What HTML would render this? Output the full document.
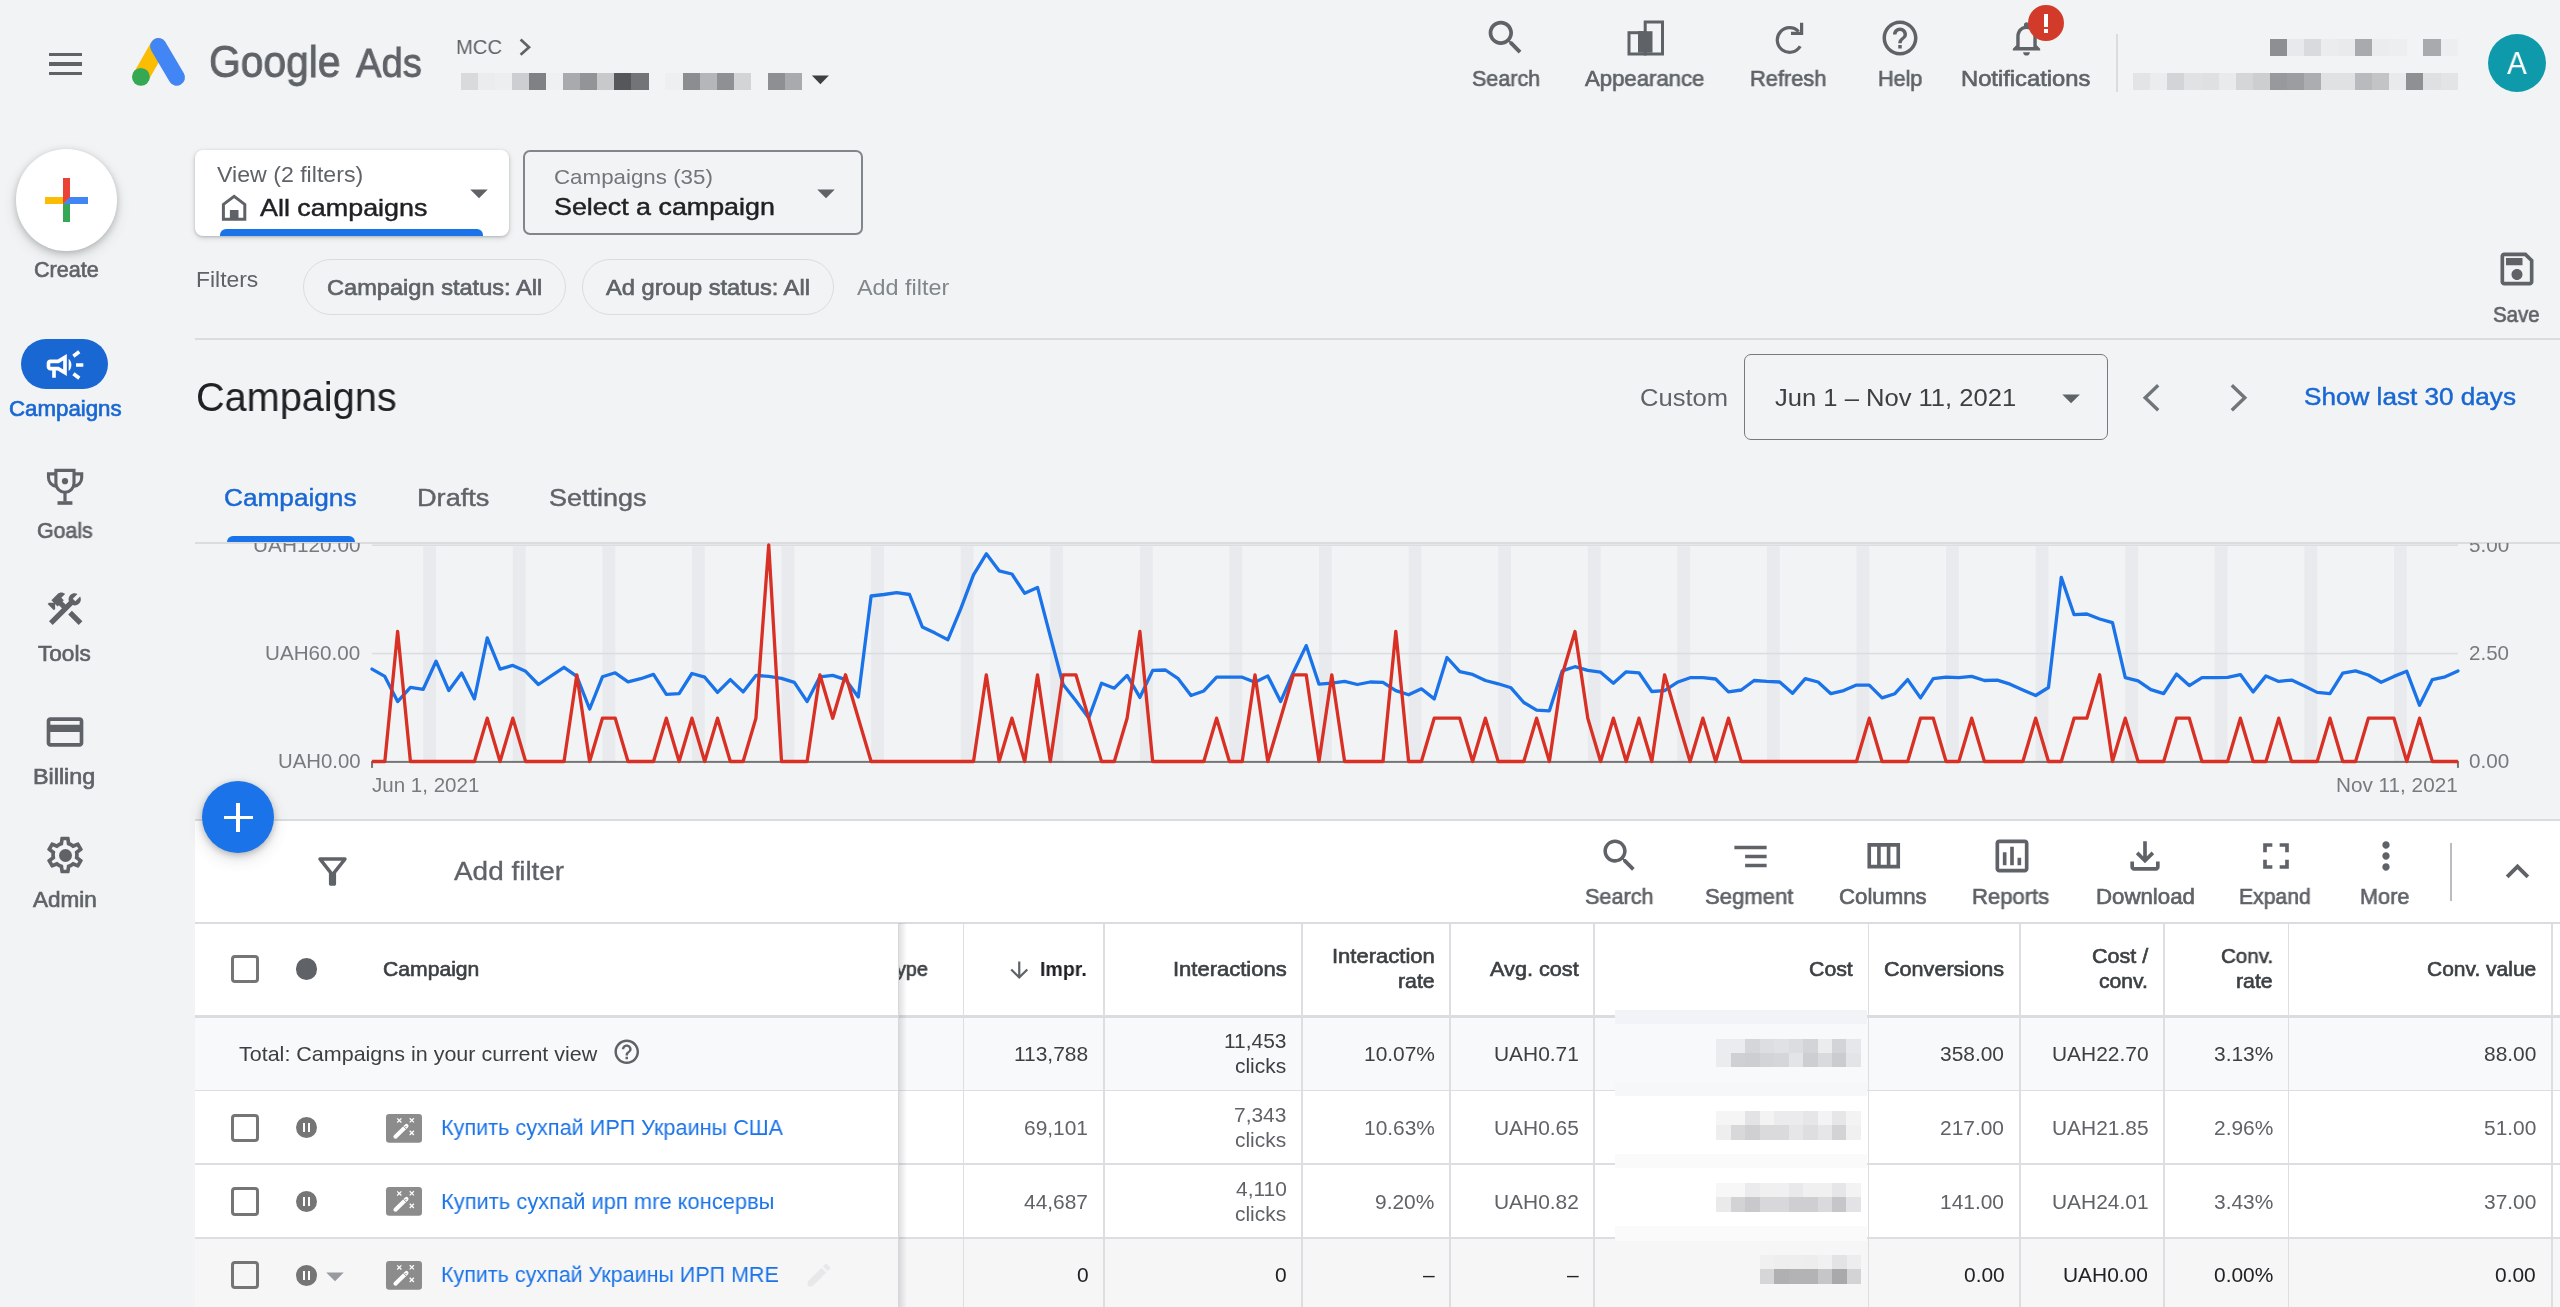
<!DOCTYPE html>
<html lang="en"><head><meta charset="utf-8"><title>Campaigns - Google Ads</title>
<style>
html,body{margin:0;padding:0}
body{width:2560px;height:1307px;overflow:hidden;background:#f1f3f4;position:relative;
 font-family:"Liberation Sans",sans-serif;}
.t{position:absolute;white-space:nowrap;display:block;will-change:transform}
.i{position:absolute;display:block;overflow:visible}
.b{position:absolute;display:block}
</style></head>
<body>
<!-- header -->
<div class="b" style="left:48.5px;top:52.5px;width:33.0px;height:3.5px;background:#5f6368;"></div>
<div class="b" style="left:48.5px;top:62.0px;width:33.0px;height:3.5px;background:#5f6368;"></div>
<div class="b" style="left:48.5px;top:71.5px;width:33.0px;height:3.5px;background:#5f6368;"></div>
<svg class="i" style="left:128px;top:34px" width="62" height="56" viewBox="0 0 62 56"><line x1="30.3" y1="12.4" x2="12.9" y2="42.9" stroke="#fbbc04" stroke-width="16.5" stroke-linecap="round"/><line x1="30.3" y1="12.25" x2="48.75" y2="43.45" stroke="#4285f4" stroke-width="16.5" stroke-linecap="round"/><circle cx="12.9" cy="42.9" r="8.9" fill="#34a853"/></svg>
<span class="t" style="left:209.4px;top:40.0px;font-size:44.04px;line-height:44.04px;color:#5f6368;transform:scaleX(0.9260);transform-origin:0 0;-webkit-text-stroke:0.9px #5f6368;">Google</span>
<span class="t" style="left:356.3px;top:43.0px;font-size:41.13px;line-height:41.13px;color:#5f6368;transform:scaleX(0.9297);transform-origin:0 0;-webkit-text-stroke:0.9px #5f6368;">Ads</span>
<span class="t" style="left:455.5px;top:36.0px;font-size:21.08px;line-height:21.08px;color:#5f6368;transform:scaleX(0.9605);transform-origin:0 0;">MCC</span>
<svg class="i" style="left:515px;top:35px" width="20" height="24" viewBox="515 35 20 24" fill="none" stroke="#5f6368" stroke-width="2.7"><path d="M520.6 39.6L529 47.2L520.6 54.8"/></svg>
<div class="b" style="left:460.7px;top:73.0px;width:17.4px;height:16.9px;background:#d9dadc;"></div>
<div class="b" style="left:477.8px;top:73.0px;width:17.4px;height:16.9px;background:#ebecee;"></div>
<div class="b" style="left:494.8px;top:73.0px;width:17.4px;height:16.9px;background:#edeef0;"></div>
<div class="b" style="left:511.9px;top:73.0px;width:17.4px;height:16.9px;background:#cdced1;"></div>
<div class="b" style="left:528.9px;top:73.0px;width:17.4px;height:16.9px;background:#808185;"></div>
<div class="b" style="left:546.0px;top:73.0px;width:17.4px;height:16.9px;background:#eff0f2;"></div>
<div class="b" style="left:563.1px;top:73.0px;width:17.4px;height:16.9px;background:#a9aaad;"></div>
<div class="b" style="left:580.1px;top:73.0px;width:17.4px;height:16.9px;background:#939497;"></div>
<div class="b" style="left:597.2px;top:73.0px;width:17.4px;height:16.9px;background:#c8c9cb;"></div>
<div class="b" style="left:614.2px;top:73.0px;width:17.4px;height:16.9px;background:#56575a;"></div>
<div class="b" style="left:631.3px;top:73.0px;width:17.4px;height:16.9px;background:#737477;"></div>
<div class="b" style="left:665.4px;top:73.0px;width:17.4px;height:16.9px;background:#eeeff1;"></div>
<div class="b" style="left:682.5px;top:73.0px;width:17.4px;height:16.9px;background:#8c8d90;"></div>
<div class="b" style="left:699.5px;top:73.0px;width:17.4px;height:16.9px;background:#b5b6b9;"></div>
<div class="b" style="left:716.6px;top:73.0px;width:17.4px;height:16.9px;background:#8f9093;"></div>
<div class="b" style="left:733.7px;top:73.0px;width:17.4px;height:16.9px;background:#d3d4d6;"></div>
<div class="b" style="left:767.8px;top:73.0px;width:17.4px;height:16.9px;background:#8e8f92;"></div>
<div class="b" style="left:784.8px;top:73.0px;width:17.4px;height:16.9px;background:#a9aaad;"></div>
<svg class="i" style="left:800.4px;top:58.4px;" width="40.8" height="42.0" viewBox="0 0 24 24" fill="#3c4043" preserveAspectRatio="none"><path d="M7 10l5 5 5-5z"/></svg>
<svg class="i" style="left:1483.0px;top:15.0px;" width="45.0" height="45.0" viewBox="0 0 24 24" fill="#5f6368" preserveAspectRatio="none"><path d="M15.5 14h-.79l-.28-.27C15.41 12.59 16 11.11 16 9.5 16 5.91 13.09 3 9.5 3S3 5.91 3 9.5 5.91 16 9.5 16c1.61 0 3.09-.59 4.23-1.57l.27.28v.79l5 4.99L20.49 19l-4.99-5zm-6 0C7.01 14 5 11.99 5 9.5S7.01 5 9.5 5 14 7.01 14 9.5 11.99 14 9.5 14z"/></svg>
<span class="t" style="left:1472.0px;top:68.0px;font-size:22.24px;line-height:22.24px;color:#5f6368;transform:scaleX(0.9679);transform-origin:0 0;-webkit-text-stroke:0.67px #5f6368;">Search</span>
<svg class="i" style="left:1627px;top:19.5px" width="38" height="36" viewBox="0 0 38 36"><rect x="18.2" y="2" width="17.3" height="32" fill="none" stroke="#5f6368" stroke-width="3"/><rect x="2" y="12.7" width="16.2" height="21.3" fill="none" stroke="#5f6368" stroke-width="3"/><rect x="11" y="11.2" width="14.5" height="21.5" fill="#5f6368"/></svg>
<span class="t" style="left:1585.4px;top:68.0px;font-size:22.24px;line-height:22.24px;color:#5f6368;transform:scaleX(0.9955);transform-origin:0 0;-webkit-text-stroke:0.67px #5f6368;">Appearance</span>
<svg class="i" style="left:1768px;top:18px" width="40" height="40" viewBox="1768 18 40 40" fill="none" stroke="#5f6368" stroke-width="3.2"><path d="M1800.2 46.2A12.3 12.3 0 1 1 1798.6 31.6"/><path d="M1801.6 22.8V33.4H1791" stroke-linejoin="miter"/></svg>
<span class="t" style="left:1750.3px;top:68.0px;font-size:22.24px;line-height:22.24px;color:#5f6368;transform:scaleX(0.9812);transform-origin:0 0;-webkit-text-stroke:0.67px #5f6368;">Refresh</span>
<svg class="i" style="left:1879.0px;top:16.5px;" width="42.0" height="42.0" viewBox="0 0 24 24" fill="#5f6368" preserveAspectRatio="none"><path d="M11 18h2v-2h-2v2zm1-16C6.48 2 2 6.48 2 12s4.48 10 10 10 10-4.48 10-10S17.52 2 12 2zm0 18c-4.41 0-8-3.59-8-8s3.59-8 8-8 8 3.59 8 8-3.59 8-8 8zm0-14c-2.21 0-4 1.79-4 4h2c0-1.1.9-2 2-2s2 .9 2 2c0 2-3 1.75-3 5h2c0-2.25 3-2.5 3-5 0-2.21-1.79-4-4-4z"/></svg>
<span class="t" style="left:1877.8px;top:68.0px;font-size:22.24px;line-height:22.24px;color:#5f6368;transform:scaleX(0.9708);transform-origin:0 0;-webkit-text-stroke:0.67px #5f6368;">Help</span>
<svg class="i" style="left:2005.5px;top:17.5px;" width="41.0" height="41.0" viewBox="0 0 24 24" fill="#5f6368" preserveAspectRatio="none"><path d="M12 22c1.1 0 2-.9 2-2h-4c0 1.1.9 2 2 2zm6-6v-5c0-3.07-1.63-5.64-4.5-6.32V4c0-.83-.67-1.5-1.5-1.5s-1.5.67-1.5 1.5v.68C7.64 5.36 6 7.92 6 11v5l-2 2v1h16v-1l-2-2zm-2 1H8v-6c0-2.48 1.51-4.5 4-4.5s4 2.02 4 4.5v6z"/></svg>
<div class="b" style="left:2028.0px;top:5.0px;width:36.0px;height:36.0px;background:#d23b2a;border-radius:50%;"></div>
<div class="b" style="left:2044.1px;top:14.2px;width:4.1px;height:12.7px;background:#fff;"></div>
<div class="b" style="left:2044.1px;top:28.9px;width:4.1px;height:3.8px;background:#fff;"></div>
<span class="t" style="left:1961.3px;top:68.0px;font-size:22.24px;line-height:22.24px;color:#5f6368;transform:scaleX(1.0683);transform-origin:0 0;-webkit-text-stroke:0.67px #5f6368;">Notifications</span>
<div class="b" style="left:2116.3px;top:34.0px;width:1.5px;height:58.0px;background:#dadce0;"></div>
<div class="b" style="left:2269.8px;top:38.9px;width:17.4px;height:16.7px;background:#8e8f93;"></div>
<div class="b" style="left:2286.9px;top:38.9px;width:17.4px;height:16.7px;background:#e8e9ec;"></div>
<div class="b" style="left:2303.9px;top:38.9px;width:17.4px;height:16.7px;background:#d9dadd;"></div>
<div class="b" style="left:2321.0px;top:38.9px;width:17.4px;height:16.7px;background:#ebecee;"></div>
<div class="b" style="left:2338.1px;top:38.9px;width:17.4px;height:16.7px;background:#e9eaec;"></div>
<div class="b" style="left:2355.2px;top:38.9px;width:17.4px;height:16.7px;background:#a9aaae;"></div>
<div class="b" style="left:2372.2px;top:38.9px;width:17.4px;height:16.7px;background:#ebecee;"></div>
<div class="b" style="left:2389.3px;top:38.9px;width:17.4px;height:16.7px;background:#edeef0;"></div>
<div class="b" style="left:2423.4px;top:38.9px;width:17.4px;height:16.7px;background:#a9aaae;"></div>
<div class="b" style="left:2440.5px;top:38.9px;width:17.4px;height:16.7px;background:#edeef0;"></div>
<div class="b" style="left:2133.2px;top:73.0px;width:17.4px;height:16.7px;background:#e3e4e6;"></div>
<div class="b" style="left:2150.3px;top:73.0px;width:17.4px;height:16.7px;background:#ebecee;"></div>
<div class="b" style="left:2167.3px;top:73.0px;width:17.4px;height:16.7px;background:#d3d4d7;"></div>
<div class="b" style="left:2184.4px;top:73.0px;width:17.4px;height:16.7px;background:#e1e2e4;"></div>
<div class="b" style="left:2201.5px;top:73.0px;width:17.4px;height:16.7px;background:#dfe0e2;"></div>
<div class="b" style="left:2218.5px;top:73.0px;width:17.4px;height:16.7px;background:#e9eaec;"></div>
<div class="b" style="left:2235.6px;top:73.0px;width:17.4px;height:16.7px;background:#d5d6d8;"></div>
<div class="b" style="left:2252.7px;top:73.0px;width:17.4px;height:16.7px;background:#cdced0;"></div>
<div class="b" style="left:2269.8px;top:73.0px;width:17.4px;height:16.7px;background:#98999c;"></div>
<div class="b" style="left:2286.8px;top:73.0px;width:17.4px;height:16.7px;background:#9c9da0;"></div>
<div class="b" style="left:2303.9px;top:73.0px;width:17.4px;height:16.7px;background:#acadb0;"></div>
<div class="b" style="left:2321.0px;top:73.0px;width:17.4px;height:16.7px;background:#e0e1e3;"></div>
<div class="b" style="left:2338.0px;top:73.0px;width:17.4px;height:16.7px;background:#e0e1e3;"></div>
<div class="b" style="left:2355.1px;top:73.0px;width:17.4px;height:16.7px;background:#b9babd;"></div>
<div class="b" style="left:2372.2px;top:73.0px;width:17.4px;height:16.7px;background:#c3c4c6;"></div>
<div class="b" style="left:2389.2px;top:73.0px;width:17.4px;height:16.7px;background:#e9eaec;"></div>
<div class="b" style="left:2406.3px;top:73.0px;width:17.4px;height:16.7px;background:#8f9094;"></div>
<div class="b" style="left:2423.4px;top:73.0px;width:17.4px;height:16.7px;background:#dfe0e2;"></div>
<div class="b" style="left:2440.5px;top:73.0px;width:17.4px;height:16.7px;background:#e3e4e6;"></div>
<div class="b" style="left:2487.8px;top:33.9px;width:58.2px;height:58.2px;background:#0e9aab;border-radius:50%;"></div>
<span class="t" style="left:2507.3px;top:48.0px;font-size:31.83px;line-height:31.83px;color:#fff;transform:scaleX(0.9326);transform-origin:0 0;">A</span>
<div class="b" style="left:195.0px;top:150.0px;width:313.5px;height:86.0px;background:#fff;border-radius:8px;box-shadow:0 1px 3px rgba(60,64,67,.28),0 2px 6px rgba(60,64,67,.14);"></div>
<span class="t" style="left:216.9px;top:165.0px;font-size:21.44px;line-height:21.44px;color:#5f6368;transform:scaleX(1.0796);transform-origin:0 0;">View (2 filters)</span>
<svg class="i" style="left:220px;top:193px" width="28" height="29" viewBox="220 193 28 29"><path d="M223.4 219.2V204.4L234.1 196.3L244.8 204.4V219.2z" fill="none" stroke="#5f6368" stroke-width="3"/><rect x="229.9" y="210" width="8.6" height="9" fill="#5f6368"/></svg>
<span class="t" style="left:260.2px;top:196.0px;font-size:24.71px;line-height:24.71px;color:#202124;transform:scaleX(1.0889);transform-origin:0 0;-webkit-text-stroke:0.45px #202124;">All campaigns</span>
<svg class="i" style="left:458.4px;top:172.2px;" width="42.0" height="42.0" viewBox="0 0 24 24" fill="#5f6368" preserveAspectRatio="none"><path d="M7 10l5 5 5-5z"/></svg>
<div class="b" style="left:220.0px;top:228.8px;width:263.1px;height:7.4px;background:#1a73e8;border-radius:6px 6px 0 0;"></div>
<div class="b" style="left:523.0px;top:149.8px;width:340.4px;height:85.7px;border:2px solid #80868b;border-radius:7px;box-sizing:border-box;"></div>
<span class="t" style="left:553.8px;top:167.0px;font-size:20.64px;line-height:20.64px;color:#72767b;transform:scaleX(1.0825);transform-origin:0 0;">Campaigns (35)</span>
<span class="t" style="left:553.6px;top:196.0px;font-size:23.69px;line-height:23.69px;color:#202124;transform:scaleX(1.1333);transform-origin:0 0;-webkit-text-stroke:0.45px #202124;">Select a campaign</span>
<svg class="i" style="left:804.7px;top:172.0px;" width="42.0" height="42.0" viewBox="0 0 24 24" fill="#5f6368" preserveAspectRatio="none"><path d="M7 10l5 5 5-5z"/></svg>
<span class="t" style="left:195.8px;top:269.0px;font-size:22.38px;line-height:22.38px;color:#5f6368;transform:scaleX(1.0224);transform-origin:0 0;">Filters</span>
<div class="b" style="left:302.5px;top:258.5px;width:263.5px;height:56.5px;border:1.3px solid #dadce0;border-radius:29px;box-sizing:border-box;"></div>
<span class="t" style="left:326.7px;top:276.0px;font-size:22.82px;line-height:22.82px;color:#5f6368;transform:scaleX(1.0345);transform-origin:0 0;-webkit-text-stroke:0.68px #5f6368;">Campaign status: All</span>
<div class="b" style="left:581.5px;top:258.5px;width:252.5px;height:56.5px;border:1.3px solid #dadce0;border-radius:29px;box-sizing:border-box;"></div>
<span class="t" style="left:605.6px;top:276.0px;font-size:22.82px;line-height:22.82px;color:#5f6368;transform:scaleX(1.0375);transform-origin:0 0;-webkit-text-stroke:0.68px #5f6368;">Ad group status: All</span>
<span class="t" style="left:857.0px;top:276.0px;font-size:22.82px;line-height:22.82px;color:#80868b;transform:scaleX(1.0249);transform-origin:0 0;">Add filter</span>
<svg class="i" style="left:2495.0px;top:247.0px;" width="44.0" height="44.0" viewBox="0 0 24 24" fill="#5f6368" preserveAspectRatio="none"><path d="M17 3H5c-1.11 0-2 .9-2 2v14c0 1.1.89 2 2 2h14c1.1 0 2-.9 2-2V7l-4-4zm2 16H5V5h11.17L19 7.83V19zm-7-7c-1.66 0-3 1.34-3 3s1.34 3 3 3 3-1.34 3-3-1.34-3-3-3zM6 6h9v4H6z"/></svg>
<span class="t" style="left:2493.0px;top:304.0px;font-size:22.24px;line-height:22.24px;color:#5f6368;transform:scaleX(0.9193);transform-origin:0 0;-webkit-text-stroke:0.67px #5f6368;">Save</span>
<div class="b" style="left:195.0px;top:338.0px;width:2365.0px;height:2.0px;background:#dadce0;"></div>
<span class="t" style="left:195.6px;top:378.0px;font-size:39.97px;line-height:39.97px;color:#202124;transform:scaleX(0.9924);transform-origin:0 0;">Campaigns</span>
<span class="t" style="left:1640.2px;top:386.0px;font-size:24.71px;line-height:24.71px;color:#5f6368;transform:scaleX(1.0337);transform-origin:0 0;">Custom</span>
<div class="b" style="left:1744.3px;top:354.3px;width:364.2px;height:86.0px;border:1.6px solid #757a80;border-radius:7px;box-sizing:border-box;"></div>
<span class="t" style="left:1775.1px;top:386.0px;font-size:24.71px;line-height:24.71px;color:#3c4043;transform:scaleX(1.0349);transform-origin:0 0;">Jun 1 – Nov 11, 2021</span>
<svg class="i" style="left:2049.7px;top:376.6px;" width="42.2" height="42.2" viewBox="0 0 24 24" fill="#5f6368" preserveAspectRatio="none"><path d="M7 10l5 5 5-5z"/></svg>
<svg class="i" style="left:2130px;top:375px" width="130" height="46" viewBox="2130 375 130 46" fill="none" stroke="#70757a" stroke-width="3.4"><path d="M2158.2 385.3L2145.2 397.7L2158.2 410.2"/><path d="M2231.8 385.3L2244.8 397.7L2231.8 410.2"/></svg>
<span class="t" style="left:2303.9px;top:385.0px;font-size:23.98px;line-height:23.98px;color:#1967d2;transform:scaleX(1.0897);transform-origin:0 0;-webkit-text-stroke:0.45px #1967d2;">Show last 30 days</span>
<span class="t" style="left:224.3px;top:486.0px;font-size:24.56px;line-height:24.56px;color:#1967d2;transform:scaleX(1.0672);transform-origin:0 0;-webkit-text-stroke:0.45px #1967d2;">Campaigns</span>
<span class="t" style="left:416.9px;top:486.0px;font-size:24.56px;line-height:24.56px;color:#5f6368;transform:scaleX(1.1067);transform-origin:0 0;-webkit-text-stroke:0.45px #5f6368;">Drafts</span>
<span class="t" style="left:548.5px;top:486.0px;font-size:24.56px;line-height:24.56px;color:#5f6368;transform:scaleX(1.0985);transform-origin:0 0;-webkit-text-stroke:0.45px #5f6368;">Settings</span>
<div class="b" style="left:195.0px;top:542.0px;width:2365.0px;height:2.0px;background:#dadce0;"></div>
<div class="b" style="left:227.0px;top:535.5px;width:128.0px;height:6.0px;background:#1a73e8;border-radius:6px 6px 0 0;"></div>
<!-- sidebar -->
<div class="b" style="left:16.1px;top:149.4px;width:101.2px;height:101.2px;background:#fff;border-radius:50%;box-shadow:0 2px 6px rgba(60,64,67,.28),0 5px 14px rgba(60,64,67,.15);"></div>
<div class="b" style="left:63.1px;top:178.3px;width:7.2px;height:21.8px;background:#ea4335;"></div>
<div class="b" style="left:63.1px;top:200.1px;width:7.2px;height:21.8px;background:#34a853;"></div>
<div class="b" style="left:45.2px;top:196.5px;width:21.5px;height:7.2px;background:#fbbc04;"></div>
<div class="b" style="left:66.7px;top:196.5px;width:21.4px;height:7.2px;background:#4285f4;"></div>
<svg class="i" style="left:63.05px;top:196.50px" width="7.2" height="7.2" viewBox="0 0 7 7"><path d="M0 0L7 0L0 7z" fill="#ea4335"/><path d="M7 0L7 7L0 7z" fill="#4285f4"/></svg>
<span class="t" style="left:34.2px;top:260.0px;font-size:21.51px;line-height:21.51px;color:#5f6368;transform:scaleX(1.0052);transform-origin:0 0;-webkit-text-stroke:0.65px #5f6368;">Create</span>
<div class="b" style="left:21.0px;top:339.0px;width:87.0px;height:50.0px;background:#1967d2;border-radius:25px;"></div>
<svg class="i" style="left:43.0px;top:342.5px;" width="44.0" height="44.0" viewBox="0 0 24 24" fill="#fff" preserveAspectRatio="none"><path d="M18 11v2h4v-2h-4zm-2 6.61c.96.71 2.21 1.65 3.2 2.39.4-.53.8-1.07 1.2-1.6-.99-.74-2.24-1.68-3.2-2.4-.4.54-.8 1.08-1.2 1.61zM20.4 5.6c-.4-.53-.8-1.07-1.2-1.6-.99.74-2.24 1.68-3.2 2.4.4.53.8 1.07 1.2 1.6.96-.72 2.21-1.65 3.2-2.4zM4 9c-1.1 0-2 .9-2 2v2c0 1.1.9 2 2 2h1v4h2v-4h1l5 3V6L8 9H4zm5.03 1.71L11 9.53v4.94l-1.97-1.18-.48-.29H4v-2h4.55l.48-.29zM15.5 12c0-1.33-.58-2.53-1.5-3.35v6.69c.92-.81 1.5-2.01 1.5-3.34z"/></svg>
<span class="t" style="left:8.5px;top:399.0px;font-size:21.51px;line-height:21.51px;color:#1967d2;transform:scaleX(1.0358);transform-origin:0 0;-webkit-text-stroke:0.65px #1967d2;">Campaigns</span>
<svg class="i" style="left:44px;top:466px" width="42" height="41" viewBox="44 466 42 41" fill="none" stroke="#5f6368" stroke-width="3.1"><path d="M55.9 470.4H74V483.2a9.05 9.05 0 0 1 -18.1 0Z"/><path d="M55.9 473.9H48.5V477.6c0 4.6 3.2 8 7.6 8.6"/><path d="M74 473.9H81.7V477.6c0 4.6 -3.2 8 -7.6 8.6"/><rect x="63.4" y="493" width="3.2" height="8.4" fill="#5f6368" stroke="none"/><rect x="57.5" y="501.2" width="14.9" height="3.6" fill="#5f6368" stroke="none"/><circle cx="65" cy="481.2" r="3.1" fill="#5f6368" stroke="none"/></svg>
<span class="t" style="left:37.0px;top:521.0px;font-size:21.51px;line-height:21.51px;color:#5f6368;transform:scaleX(0.9894);transform-origin:0 0;-webkit-text-stroke:0.65px #5f6368;">Goals</span>
<svg class="i" style="left:43.9px;top:587.5px;" width="42.1" height="41.9" viewBox="0 0 24 24" fill="#5f6368" preserveAspectRatio="none"><path d="M13.783 15.172l2.121-2.121 5.996 5.996-2.121 2.121zM17.5 10c1.93 0 3.5-1.57 3.5-3.5 0-.58-.16-1.12-.41-1.6l-2.7 2.7-1.49-1.49 2.7-2.7c-.48-.25-1.02-.41-1.6-.41C15.57 3 14 4.57 14 6.5c0 .41.08.8.21 1.16l-1.85 1.85-1.78-1.78.71-.71-1.41-1.41L12 3.49c-1.17-1.17-3.07-1.17-4.24 0L4.22 7.03l1.41 1.41H2.81l-.71.71 3.54 3.54.71-.71V9.15l1.41 1.41.71-.71 1.78 1.78-7.41 7.41 2.12 2.12L16.34 9.79c.36.13.75.21 1.16.21z"/></svg>
<span class="t" style="left:38.4px;top:644.0px;font-size:21.51px;line-height:21.51px;color:#5f6368;transform:scaleX(1.0514);transform-origin:0 0;-webkit-text-stroke:0.65px #5f6368;">Tools</span>
<svg class="i" style="left:43.0px;top:710.0px;" width="44.0" height="44.0" viewBox="0 0 24 24" fill="#5f6368" preserveAspectRatio="none"><path d="M20 4H4c-1.11 0-1.99.89-1.99 2L2 18c0 1.11.89 2 2 2h16c1.11 0 2-.89 2-2V6c0-1.11-.89-2-2-2zm0 14H4v-6h16v6zm0-10H4V6h16v2z"/></svg>
<span class="t" style="left:33.4px;top:767.0px;font-size:21.51px;line-height:21.51px;color:#5f6368;transform:scaleX(1.0855);transform-origin:0 0;-webkit-text-stroke:0.65px #5f6368;">Billing</span>
<svg class="i" style="left:43.0px;top:833.0px;" width="44.0" height="44.0" viewBox="0 0 24 24" fill="#5f6368" preserveAspectRatio="none"><path d="M19.43 12.98c.04-.32.07-.64.07-.98 0-.34-.03-.66-.07-.98l2.11-1.65c.19-.15.24-.42.12-.64l-2-3.46c-.09-.16-.26-.25-.44-.25-.06 0-.12.01-.17.03l-2.49 1c-.52-.4-1.08-.73-1.69-.98l-.38-2.65C14.46 2.18 14.25 2 14 2h-4c-.25 0-.46.18-.49.42l-.38 2.65c-.61.25-1.17.59-1.69.98l-2.49-1c-.06-.02-.12-.03-.18-.03-.17 0-.34.09-.43.25l-2 3.46c-.13.22-.07.49.12.64l2.11 1.65c-.04.32-.07.65-.07.98 0 .33.03.66.07.98l-2.11 1.65c-.19.15-.24.42-.12.64l2 3.46c.09.16.26.25.44.25.06 0 .12-.01.17-.03l2.49-1c.52.4 1.08.73 1.69.98l.38 2.65c.03.24.24.42.49.42h4c.25 0 .46-.18.49-.42l.38-2.65c.61-.25 1.17-.59 1.69-.98l2.49 1c.06.02.12.03.18.03.17 0 .34-.09.43-.25l2-3.46c.12-.22.07-.49-.12-.64l-2.11-1.65zm-1.98-1.71c.04.31.05.52.05.73 0 .21-.02.43-.05.73l-.14 1.13.89.7 1.08.84-.7 1.21-1.27-.51-1.04-.42-.9.68c-.43.32-.84.56-1.25.73l-1.06.43-.16 1.13-.2 1.35h-1.4l-.19-1.35-.16-1.13-1.06-.43c-.43-.18-.83-.41-1.23-.71l-.91-.7-1.06.43-1.27.51-.7-1.21 1.08-.84.89-.7-.14-1.13c-.03-.31-.05-.54-.05-.74s.02-.43.05-.73l.14-1.13-.89-.7-1.08-.84.7-1.21 1.27.51 1.04.42.9-.68c.43-.32.84-.56 1.25-.73l1.06-.43.16-1.13.2-1.35h1.39l.19 1.35.16 1.13 1.06.43c.43.18.83.41 1.23.71l.91.7 1.06-.43 1.27-.51.7 1.21-1.07.85-.89.7.14 1.13z"/></svg>
<div class="b" style="left:58.5px;top:848.5px;width:13.0px;height:13.0px;background:#5f6368;border-radius:50%;"></div>
<span class="t" style="left:32.9px;top:890.0px;font-size:21.51px;line-height:21.51px;color:#5f6368;transform:scaleX(1.0463);transform-origin:0 0;-webkit-text-stroke:0.65px #5f6368;">Admin</span>
<!-- chart -->
<svg class="i" style="left:195px;top:542.6px" width="2365" height="277.4" viewBox="195 542.6 2365 277.4"><rect x="423.2" y="545.8" width="12.8" height="215.70000000000005" fill="#e8eaed"/><rect x="512.8" y="545.8" width="12.8" height="215.70000000000005" fill="#e8eaed"/><rect x="602.4" y="545.8" width="12.8" height="215.70000000000005" fill="#e8eaed"/><rect x="691.9" y="545.8" width="12.8" height="215.70000000000005" fill="#e8eaed"/><rect x="781.5" y="545.8" width="12.8" height="215.70000000000005" fill="#e8eaed"/><rect x="871.1" y="545.8" width="12.8" height="215.70000000000005" fill="#e8eaed"/><rect x="960.7" y="545.8" width="12.8" height="215.70000000000005" fill="#e8eaed"/><rect x="1050.3" y="545.8" width="12.8" height="215.70000000000005" fill="#e8eaed"/><rect x="1139.9" y="545.8" width="12.8" height="215.70000000000005" fill="#e8eaed"/><rect x="1229.4" y="545.8" width="12.8" height="215.70000000000005" fill="#e8eaed"/><rect x="1319.0" y="545.8" width="12.8" height="215.70000000000005" fill="#e8eaed"/><rect x="1408.6" y="545.8" width="12.8" height="215.70000000000005" fill="#e8eaed"/><rect x="1498.2" y="545.8" width="12.8" height="215.70000000000005" fill="#e8eaed"/><rect x="1587.8" y="545.8" width="12.8" height="215.70000000000005" fill="#e8eaed"/><rect x="1677.3" y="545.8" width="12.8" height="215.70000000000005" fill="#e8eaed"/><rect x="1766.9" y="545.8" width="12.8" height="215.70000000000005" fill="#e8eaed"/><rect x="1856.5" y="545.8" width="12.8" height="215.70000000000005" fill="#e8eaed"/><rect x="1946.1" y="545.8" width="12.8" height="215.70000000000005" fill="#e8eaed"/><rect x="2035.7" y="545.8" width="12.8" height="215.70000000000005" fill="#e8eaed"/><rect x="2125.3" y="545.8" width="12.8" height="215.70000000000005" fill="#e8eaed"/><rect x="2214.8" y="545.8" width="12.8" height="215.70000000000005" fill="#e8eaed"/><rect x="2304.4" y="545.8" width="12.8" height="215.70000000000005" fill="#e8eaed"/><rect x="2394.0" y="545.8" width="12.8" height="215.70000000000005" fill="#e8eaed"/><rect x="372.0" y="544.05" width="2086.0" height="1.5" fill="#dadce0"/><rect x="372.0" y="652.4" width="2086.0" height="1.5" fill="#dadce0"/><rect x="371.0" y="760.5" width="2088.0" height="2" fill="#757575"/><rect x="371.0" y="761.5" width="2" height="6" fill="#757575"/><rect x="2457.0" y="761.5" width="2" height="6" fill="#757575"/><polyline points="372.0,668.7 384.8,676.0 397.6,701.2 410.4,687.0 423.2,688.9 436.0,660.8 448.8,690.2 461.6,672.7 474.4,698.5 487.2,637.5 500.0,668.7 512.8,665.0 525.6,670.9 538.4,684.1 551.2,675.5 564.0,666.9 576.8,676.0 589.6,708.6 602.4,676.4 615.2,672.4 628.0,681.4 640.7,678.3 653.5,674.0 666.3,693.9 679.1,693.3 691.9,673.1 704.7,676.8 717.5,692.0 730.3,679.2 743.1,691.5 755.9,675.0 768.7,676.0 781.5,678.0 794.3,682.0 807.1,701.2 819.9,676.4 832.7,675.0 845.5,679.2 858.3,696.6 871.1,595.6 883.9,594.1 896.7,592.3 909.5,594.1 922.3,626.5 935.1,632.7 947.9,639.3 960.7,608.5 973.5,574.5 986.3,553.4 999.1,570.4 1011.9,573.6 1024.7,592.9 1037.5,587.0 1050.3,636.0 1063.1,684.1 1075.9,700.3 1088.7,717.7 1101.5,682.8 1114.3,687.8 1127.1,675.0 1139.9,697.0 1152.7,670.0 1165.4,669.6 1178.2,678.3 1191.0,695.1 1203.8,690.6 1216.6,676.8 1229.4,676.8 1242.2,676.8 1255.0,681.9 1267.8,675.5 1280.6,701.2 1293.4,671.8 1306.2,645.2 1319.0,683.8 1331.8,682.8 1344.6,681.0 1357.4,684.1 1370.2,681.6 1383.0,681.9 1395.8,690.2 1408.6,694.4 1421.4,688.4 1434.2,698.5 1447.0,657.1 1459.8,671.3 1472.6,674.0 1485.4,680.1 1498.2,683.4 1511.0,687.4 1523.8,702.1 1536.6,709.8 1549.4,710.4 1562.2,670.5 1575.0,666.3 1587.8,670.0 1600.6,671.8 1613.4,682.8 1626.2,671.4 1639.0,672.4 1651.8,691.1 1664.6,690.2 1677.3,681.9 1690.1,677.3 1702.9,677.3 1715.7,678.6 1728.5,691.5 1741.3,689.6 1754.1,680.1 1766.9,681.0 1779.7,681.6 1792.5,692.9 1805.3,678.3 1818.1,681.6 1830.9,693.3 1843.7,690.2 1856.5,684.7 1869.3,684.7 1882.1,697.5 1894.9,693.3 1907.7,679.2 1920.5,697.5 1933.3,678.3 1946.1,676.8 1958.9,677.3 1971.7,676.0 1984.5,680.1 1997.3,679.7 2010.1,683.8 2022.9,689.6 2035.7,695.1 2048.5,687.1 2061.3,577.0 2074.1,614.3 2086.9,613.6 2099.7,618.6 2112.5,622.2 2125.3,677.3 2138.1,680.5 2150.9,689.3 2163.7,693.3 2176.5,673.7 2189.3,685.2 2202.0,677.3 2214.8,677.3 2227.6,677.0 2240.4,674.2 2253.2,691.5 2266.0,675.5 2278.8,681.0 2291.6,679.7 2304.4,685.6 2317.2,692.0 2330.0,693.3 2342.8,672.7 2355.6,670.5 2368.4,674.6 2381.2,681.9 2394.0,676.0 2406.8,670.9 2419.6,704.9 2432.4,679.2 2445.2,676.4 2458.0,670.5" fill="none" stroke="#1a73e8" stroke-width="3.3" stroke-linejoin="round" stroke-linecap="round"/><polyline points="372.0,761.1 384.8,761.1 397.6,631.1 410.4,761.1 423.2,761.1 436.0,761.1 448.8,761.1 461.6,761.1 474.4,761.1 487.2,717.8 500.0,761.1 512.8,717.8 525.6,761.1 538.4,761.1 551.2,761.1 564.0,761.1 576.8,674.4 589.6,761.1 602.4,717.8 615.2,717.8 628.0,761.1 640.7,761.1 653.5,761.1 666.3,717.8 679.1,761.1 691.9,717.8 704.7,761.1 717.5,717.8 730.3,761.1 743.1,761.1 755.9,717.8 768.7,544.4 781.5,761.1 794.3,761.1 807.1,761.1 819.9,674.4 832.7,717.8 845.5,674.4 858.3,717.8 871.1,761.1 883.9,761.1 896.7,761.1 909.5,761.1 922.3,761.1 935.1,761.1 947.9,761.1 960.7,761.1 973.5,761.1 986.3,674.4 999.1,761.1 1011.9,717.8 1024.7,761.1 1037.5,674.4 1050.3,761.1 1063.1,674.4 1075.9,674.4 1088.7,717.8 1101.5,761.1 1114.3,761.1 1127.1,717.8 1139.9,631.1 1152.7,761.1 1165.4,761.1 1178.2,761.1 1191.0,761.1 1203.8,761.1 1216.6,717.8 1229.4,761.1 1242.2,761.1 1255.0,674.4 1267.8,761.1 1280.6,717.8 1293.4,674.4 1306.2,674.4 1319.0,761.1 1331.8,674.4 1344.6,761.1 1357.4,761.1 1370.2,761.1 1383.0,761.1 1395.8,631.1 1408.6,761.1 1421.4,761.1 1434.2,717.8 1447.0,717.8 1459.8,717.8 1472.6,761.1 1485.4,717.8 1498.2,761.1 1511.0,761.1 1523.8,761.1 1536.6,717.8 1549.4,761.1 1562.2,674.4 1575.0,631.1 1587.8,717.8 1600.6,761.1 1613.4,717.8 1626.2,761.1 1639.0,717.8 1651.8,761.1 1664.6,674.4 1677.3,717.8 1690.1,761.1 1702.9,717.8 1715.7,761.1 1728.5,717.8 1741.3,761.1 1754.1,761.1 1766.9,761.1 1779.7,761.1 1792.5,761.1 1805.3,761.1 1818.1,761.1 1830.9,761.1 1843.7,761.1 1856.5,761.1 1869.3,717.8 1882.1,761.1 1894.9,761.1 1907.7,761.1 1920.5,717.8 1933.3,717.8 1946.1,761.1 1958.9,761.1 1971.7,717.8 1984.5,761.1 1997.3,761.1 2010.1,761.1 2022.9,761.1 2035.7,717.8 2048.5,761.1 2061.3,761.1 2074.1,717.8 2086.9,717.8 2099.7,674.4 2112.5,761.1 2125.3,717.8 2138.1,761.1 2150.9,761.1 2163.7,761.1 2176.5,717.8 2189.3,717.8 2202.0,761.1 2214.8,761.1 2227.6,761.1 2240.4,717.8 2253.2,761.1 2266.0,761.1 2278.8,717.8 2291.6,761.1 2304.4,761.1 2317.2,761.1 2330.0,717.8 2342.8,761.1 2355.6,761.1 2368.4,717.8 2381.2,717.8 2394.0,717.8 2406.8,761.1 2419.6,717.8 2432.4,761.1 2445.2,761.1 2458.0,761.1" fill="none" stroke="#d93025" stroke-width="3.3" stroke-linejoin="round" stroke-linecap="butt"/></svg>
<div class="b" style="left:195px;top:543.0px;width:2365px;height:277.0px;overflow:hidden"><span class="t" style="left:57.8px;top:-8.0px;font-size:20.20px;line-height:20.20px;color:#777a7e;transform:scaleX(1.0301);transform-origin:0 0;">UAH120.00</span>
<span class="t" style="left:70.2px;top:100.0px;font-size:20.20px;line-height:20.20px;color:#777a7e;transform:scaleX(1.0213);transform-origin:0 0;">UAH60.00</span>
<span class="t" style="left:82.8px;top:208.0px;font-size:20.20px;line-height:20.20px;color:#777a7e;transform:scaleX(1.0076);transform-origin:0 0;">UAH0.00</span>
<span class="t" style="left:2274.0px;top:-8.0px;font-size:20.20px;line-height:20.20px;color:#777a7e;transform:scaleX(1.0249);transform-origin:0 0;">5.00</span>
<span class="t" style="left:2274.3px;top:100.0px;font-size:20.20px;line-height:20.20px;color:#777a7e;transform:scaleX(1.0172);transform-origin:0 0;">2.50</span>
<span class="t" style="left:2274.0px;top:208.0px;font-size:20.20px;line-height:20.20px;color:#777a7e;transform:scaleX(1.0249);transform-origin:0 0;">0.00</span>
<span class="t" style="left:177.2px;top:232.0px;font-size:20.20px;line-height:20.20px;color:#777a7e;transform:scaleX(1.0171);transform-origin:0 0;">Jun 1, 2021</span>
<span class="t" style="left:2140.5px;top:232.0px;font-size:20.20px;line-height:20.20px;color:#777a7e;transform:scaleX(1.0262);transform-origin:0 0;">Nov 11, 2021</span>
</div>
<!-- table -->
<div class="b" style="left:195.0px;top:820.0px;width:2365.0px;height:487.0px;background:#fff;"></div>
<div class="b" style="left:195.0px;top:819.3px;width:2365.0px;height:2.0px;background:#dadce0;"></div>
<div class="b" style="left:201.7px;top:781.3px;width:72.0px;height:72.0px;background:#1a73e8;border-radius:50%;box-shadow:0 2px 6px rgba(60,64,67,.32),0 6px 16px rgba(60,64,67,.16);"></div>
<div class="b" style="left:223.5px;top:815.6px;width:29.0px;height:3.4px;background:#fff;"></div>
<div class="b" style="left:236.3px;top:802.8px;width:3.4px;height:29.0px;background:#fff;"></div>
<svg class="i" style="left:310.5px;top:850.0px;" width="43.0" height="43.0" viewBox="0 0 24 24" fill="#5f6368" preserveAspectRatio="none"><path d="M7 6h10l-5.01 6.3L7 6zm-2.75-.39C6.27 8.2 10 13 10 13v6c0 .55.45 1 1 1h2c.55 0 1-.45 1-1v-6s3.72-4.8 5.74-7.39c.51-.66.04-1.61-.79-1.61H5.04c-.83 0-1.3.95-.79 1.61z"/></svg>
<span class="t" style="left:453.6px;top:859.0px;font-size:25.00px;line-height:25.00px;color:#5f6368;transform:scaleX(1.1165);transform-origin:0 0;-webkit-text-stroke:0.3px #5f6368;">Add filter</span>
<svg class="i" style="left:1597.6px;top:833.7px;" width="43.0" height="43.0" viewBox="0 0 24 24" fill="#5f6368" preserveAspectRatio="none"><path d="M15.5 14h-.79l-.28-.27C15.41 12.59 16 11.11 16 9.5 16 5.91 13.09 3 9.5 3S3 5.91 3 9.5 5.91 16 9.5 16c1.61 0 3.09-.59 4.23-1.57l.27.28v.79l5 4.99L20.49 19l-4.99-5zm-6 0C7.01 14 5 11.99 5 9.5S7.01 5 9.5 5 14 7.01 14 9.5 11.99 14 9.5 14z"/></svg>
<span class="t" style="left:1584.5px;top:886.0px;font-size:22.24px;line-height:22.24px;color:#5f6368;transform:scaleX(0.9736);transform-origin:0 0;-webkit-text-stroke:0.67px #5f6368;">Search</span>
<svg class="i" style="left:1728.5px;top:834.5px;" width="43.0" height="43.0" viewBox="0 0 24 24" fill="#5f6368" preserveAspectRatio="none"><path d="M9 18h12v-2H9v2zM3 6v2h18V6H3zm6 7h12v-2H9v2z"/></svg>
<span class="t" style="left:1705.4px;top:886.0px;font-size:22.24px;line-height:22.24px;color:#5f6368;transform:scaleX(0.9932);transform-origin:0 0;-webkit-text-stroke:0.67px #5f6368;">Segment</span>
<svg class="i" style="left:1861.5px;top:833.5px;" width="43.5" height="43.5" viewBox="0 0 24 24" fill="#5f6368" preserveAspectRatio="none"><path d="M3 5v14h18V5H3zm5.33 12H5V7h3.33v10zm5.34 0h-3.33V7h3.33v10zM19 17h-3.33V7H19v10z"/></svg>
<span class="t" style="left:1839.4px;top:886.0px;font-size:22.24px;line-height:22.24px;color:#5f6368;transform:scaleX(0.9949);transform-origin:0 0;-webkit-text-stroke:0.67px #5f6368;">Columns</span>
<svg class="i" style="left:1989.5px;top:833.5px;" width="44.0" height="44.0" viewBox="0 0 24 24" fill="#5f6368" preserveAspectRatio="none"><path d="M19 3H5c-1.1 0-2 .9-2 2v14c0 1.1.9 2 2 2h14c1.1 0 2-.9 2-2V5c0-1.1-.9-2-2-2zm0 16H5V5h14v14zM7 10h2v7H7zm4-3h2v10h-2zm4 6h2v4h-2z"/></svg>
<span class="t" style="left:1972.4px;top:886.0px;font-size:22.24px;line-height:22.24px;color:#5f6368;transform:scaleX(0.9914);transform-origin:0 0;-webkit-text-stroke:0.67px #5f6368;">Reports</span>
<svg class="i" style="left:2122.5px;top:833.5px;" width="44.0" height="44.0" viewBox="0 0 24 24" fill="#5f6368" preserveAspectRatio="none"><path d="M18 15v3H6v-3H4v3c0 1.1.9 2 2 2h12c1.1 0 2-.9 2-2v-3h-2zm-1-4l-1.41-1.41L13 12.17V4h-2v8.17L8.41 9.59 7 11l5 5 5-5z"/></svg>
<span class="t" style="left:2095.5px;top:886.0px;font-size:22.24px;line-height:22.24px;color:#5f6368;transform:scaleX(0.9959);transform-origin:0 0;-webkit-text-stroke:0.67px #5f6368;">Download</span>
<svg class="i" style="left:2254.0px;top:833.5px;" width="44.0" height="44.0" viewBox="0 0 24 24" fill="#5f6368" preserveAspectRatio="none"><path d="M7 14H5v5h5v-2H7v-3zm-2-4h2V7h3V5H5v5zm12 7h-3v2h5v-5h-2v3zM14 5v2h3v3h2V5h-5z"/></svg>
<span class="t" style="left:2239.4px;top:886.0px;font-size:22.24px;line-height:22.24px;color:#5f6368;transform:scaleX(0.9519);transform-origin:0 0;-webkit-text-stroke:0.67px #5f6368;">Expand</span>
<svg class="i" style="left:2363.5px;top:833.5px;" width="44.0" height="44.0" viewBox="0 0 24 24" fill="#5f6368" preserveAspectRatio="none"><path d="M12 8c1.1 0 2-.9 2-2s-.9-2-2-2-2 .9-2 2 .9 2 2 2zm0 2c-1.1 0-2 .9-2 2s.9 2 2 2 2-.9 2-2-.9-2-2-2zm0 6c-1.1 0-2 .9-2 2s.9 2 2 2 2-.9 2-2-.9-2-2-2z"/></svg>
<span class="t" style="left:2360.3px;top:886.0px;font-size:22.24px;line-height:22.24px;color:#5f6368;transform:scaleX(0.9750);transform-origin:0 0;-webkit-text-stroke:0.67px #5f6368;">More</span>
<div class="b" style="left:2450.3px;top:842.6px;width:1.6px;height:58.0px;background:#b9bcc1;"></div>
<svg class="i" style="left:2493.5px;top:848.0px;" width="47.0" height="47.0" viewBox="0 0 24 24" fill="#5f6368" preserveAspectRatio="none"><path d="M12 8l-6 6 1.41 1.41L12 10.83l4.59 4.58L18 14z"/></svg>
<div class="b" style="left:195.0px;top:922.0px;width:2365.0px;height:1.6px;background:#dadce0;"></div>
<div class="b" style="left:195.0px;top:1014.5px;width:2365.0px;height:3.4px;background:#dadce0;"></div>
<div class="b" style="left:195.0px;top:1018.0px;width:2365.0px;height:72.0px;background:#f8f9fa;"></div>
<div class="b" style="left:195.0px;top:1238.6px;width:2365.0px;height:70.0px;background:#f6f6f7;"></div>
<div class="b" style="left:195.0px;top:1089.6px;width:2365.0px;height:1.2px;background:#dcdee2;"></div>
<div class="b" style="left:195.0px;top:1163.4px;width:2365.0px;height:1.2px;background:#dcdee2;"></div>
<div class="b" style="left:195.0px;top:1237.4px;width:2365.0px;height:1.2px;background:#dcdee2;"></div>
<div class="b" style="left:962.9px;top:923.0px;width:1.2px;height:384.0px;background:#dcdee2;"></div>
<div class="b" style="left:1103.4px;top:923.0px;width:1.2px;height:384.0px;background:#dcdee2;"></div>
<div class="b" style="left:1301.4px;top:923.0px;width:1.2px;height:384.0px;background:#dcdee2;"></div>
<div class="b" style="left:1449.4px;top:923.0px;width:1.2px;height:384.0px;background:#dcdee2;"></div>
<div class="b" style="left:1593.4px;top:923.0px;width:1.2px;height:384.0px;background:#dcdee2;"></div>
<div class="b" style="left:1867.9px;top:923.0px;width:1.2px;height:384.0px;background:#dcdee2;"></div>
<div class="b" style="left:2019.4px;top:923.0px;width:1.2px;height:384.0px;background:#dcdee2;"></div>
<div class="b" style="left:2163.4px;top:923.0px;width:1.2px;height:384.0px;background:#dcdee2;"></div>
<div class="b" style="left:2288.1px;top:923.0px;width:1.2px;height:384.0px;background:#dcdee2;"></div>
<div class="b" style="left:2551.4px;top:923.0px;width:1.2px;height:384.0px;background:#dcdee2;"></div>
<div class="b" style="left:899.0px;top:923.0px;width:8.0px;height:384.0px;background:linear-gradient(to right,rgba(60,64,67,.16),rgba(60,64,67,0));"></div>
<div class="b" style="left:897.6px;top:923.0px;width:1.6px;height:384.0px;background:#d6d8dc;"></div>
<div class="b" style="left:230.9px;top:954.8px;width:28.3px;height:28.3px;border:3.3px solid #757575;border-radius:4px;box-sizing:border-box;"></div>
<div class="b" style="left:295.8px;top:958.2px;width:21.4px;height:21.4px;background:#5f6368;border-radius:50%;"></div>
<span class="t" style="left:383.0px;top:959.0px;font-size:20.93px;line-height:20.93px;color:#3c4043;transform:scaleX(1.0105);transform-origin:0 0;-webkit-text-stroke:0.63px #3c4043;">Campaign</span>
<div class="b" style="left:899px;top:940px;width:40px;height:60px;overflow:hidden"><span class="t" style="left:-14.5px;top:19.0px;font-size:20.93px;line-height:20.93px;color:#3c4043;transform:scaleX(0.9454);transform-origin:0 0;-webkit-text-stroke:0.63px #3c4043;">Type</span>
</div>
<svg class="i" style="left:1006.2px;top:957.0px;" width="26.5" height="26.5" viewBox="0 0 24 24" fill="#5f6368" preserveAspectRatio="none"><path d="M20 12l-1.41-1.41L13 16.17V4h-2v12.17l-5.58-5.59L4 12l8 8 8-8z"/></svg>
<span class="t" style="left:1040.4px;top:959.0px;font-size:20.93px;line-height:20.93px;color:#202124;transform:scaleX(0.9337);transform-origin:0 0;font-weight:700;">Impr.</span>
<span class="t" style="left:1172.8px;top:959.0px;font-size:20.93px;line-height:20.93px;color:#3c4043;transform:scaleX(1.0509);transform-origin:0 0;-webkit-text-stroke:0.63px #3c4043;">Interactions</span>
<span class="t" style="left:1331.6px;top:946.0px;font-size:20.93px;line-height:20.93px;color:#3c4043;transform:scaleX(1.0529);transform-origin:0 0;-webkit-text-stroke:0.63px #3c4043;">Interaction</span>
<span class="t" style="left:1397.8px;top:971.0px;font-size:20.93px;line-height:20.93px;color:#3c4043;transform:scaleX(1.0176);transform-origin:0 0;-webkit-text-stroke:0.63px #3c4043;">rate</span>
<span class="t" style="left:1490.0px;top:959.0px;font-size:20.93px;line-height:20.93px;color:#3c4043;transform:scaleX(1.0350);transform-origin:0 0;-webkit-text-stroke:0.63px #3c4043;">Avg. cost</span>
<span class="t" style="left:1809.0px;top:959.0px;font-size:20.93px;line-height:20.93px;color:#3c4043;transform:scaleX(1.0178);transform-origin:0 0;-webkit-text-stroke:0.63px #3c4043;">Cost</span>
<span class="t" style="left:1884.0px;top:959.0px;font-size:20.93px;line-height:20.93px;color:#3c4043;transform:scaleX(1.0315);transform-origin:0 0;-webkit-text-stroke:0.63px #3c4043;">Conversions</span>
<span class="t" style="left:2091.8px;top:946.0px;font-size:20.93px;line-height:20.93px;color:#3c4043;transform:scaleX(1.0281);transform-origin:0 0;-webkit-text-stroke:0.63px #3c4043;">Cost /</span>
<span class="t" style="left:2099.0px;top:971.0px;font-size:20.93px;line-height:20.93px;color:#3c4043;transform:scaleX(1.0109);transform-origin:0 0;-webkit-text-stroke:0.63px #3c4043;">conv.</span>
<span class="t" style="left:2220.5px;top:946.0px;font-size:20.93px;line-height:20.93px;color:#3c4043;transform:scaleX(0.9826);transform-origin:0 0;-webkit-text-stroke:0.63px #3c4043;">Conv.</span>
<span class="t" style="left:2236.0px;top:971.0px;font-size:20.93px;line-height:20.93px;color:#3c4043;transform:scaleX(1.0176);transform-origin:0 0;-webkit-text-stroke:0.63px #3c4043;">rate</span>
<span class="t" style="left:2426.7px;top:959.0px;font-size:20.93px;line-height:20.93px;color:#3c4043;transform:scaleX(1.0030);transform-origin:0 0;-webkit-text-stroke:0.63px #3c4043;">Conv. value</span>
<span class="t" style="left:238.6px;top:1044.0px;font-size:20.93px;line-height:20.93px;color:#3c4043;transform:scaleX(1.0270);transform-origin:0 0;">Total: Campaigns in your current view</span>
<svg class="i" style="left:612.0px;top:1037.3px;" width="29.5" height="29.5" viewBox="0 0 24 24" fill="#5f6368" preserveAspectRatio="none"><path d="M11 18h2v-2h-2v2zm1-16C6.48 2 2 6.48 2 12s4.48 10 10 10 10-4.48 10-10S17.52 2 12 2zm0 18c-4.41 0-8-3.59-8-8s3.59-8 8-8 8 3.59 8 8-3.59 8-8 8zm0-14c-2.21 0-4 1.79-4 4h2c0-1.1.9-2 2-2s2 .9 2 2c0 2-3 1.75-3 5h2c0-2.25 3-2.5 3-5 0-2.21-1.79-4-4-4z"/></svg>
<span class="t" style="left:1014.2px;top:1044.0px;font-size:20.93px;line-height:20.93px;color:#3c4043;transform:scaleX(1.0000);transform-origin:0 0;">113,788</span>
<span class="t" style="left:1224.0px;top:1031.0px;font-size:20.93px;line-height:20.93px;color:#3c4043;transform:scaleX(1.0000);transform-origin:0 0;">11,453</span>
<span class="t" style="left:1235.3px;top:1056.0px;font-size:20.93px;line-height:20.93px;color:#3c4043;transform:scaleX(1.0000);transform-origin:0 0;">clicks</span>
<span class="t" style="left:1363.5px;top:1044.0px;font-size:20.93px;line-height:20.93px;color:#3c4043;transform:scaleX(1.0000);transform-origin:0 0;">10.07%</span>
<span class="t" style="left:1493.6px;top:1044.0px;font-size:20.93px;line-height:20.93px;color:#3c4043;transform:scaleX(1.0000);transform-origin:0 0;">UAH0.71</span>
<span class="t" style="left:1940.4px;top:1044.0px;font-size:20.93px;line-height:20.93px;color:#3c4043;transform:scaleX(1.0000);transform-origin:0 0;">358.00</span>
<span class="t" style="left:2051.7px;top:1044.0px;font-size:20.93px;line-height:20.93px;color:#3c4043;transform:scaleX(1.0000);transform-origin:0 0;">UAH22.70</span>
<span class="t" style="left:2213.5px;top:1044.0px;font-size:20.93px;line-height:20.93px;color:#3c4043;transform:scaleX(1.0000);transform-origin:0 0;">3.13%</span>
<span class="t" style="left:2483.6px;top:1044.0px;font-size:20.93px;line-height:20.93px;color:#3c4043;transform:scaleX(1.0000);transform-origin:0 0;">88.00</span>
<div class="b" style="left:231.0px;top:1113.5px;width:28.3px;height:28.3px;border:3.3px solid #757575;border-radius:4px;box-sizing:border-box;"></div>
<div class="b" style="left:295.7px;top:1116.9px;width:21.6px;height:21.6px;background:#757575;border-radius:50%;"></div>
<div class="b" style="left:302.6px;top:1123.1px;width:2.7px;height:9.2px;background:#fff;"></div>
<div class="b" style="left:307.6px;top:1123.1px;width:2.7px;height:9.2px;background:#fff;"></div>
<svg class="i" style="left:386.0px;top:1113.5px" width="36" height="28.7" viewBox="0 0 36 28.7"><rect width="36" height="28.7" rx="3.2" fill="#8c8c8c"/><line x1="9.4" y1="22.7" x2="20.5" y2="12" stroke="#fff" stroke-width="4" stroke-linecap="round"/><line x1="17.3" y1="12.1" x2="20.3" y2="15.2" stroke="#8c8c8c" stroke-width="0.9"/><circle cx="19.9" cy="12.6" r="0.7" fill="#8c8c8c"/><path d="M11.200000000000001 4.35L15.4 8.55M15.4 4.35L11.200000000000001 8.55" stroke="#fff" stroke-width="1.25" fill="none"/><path d="M23.7 4.199999999999999L27.900000000000002 8.4M27.900000000000002 4.199999999999999L23.7 8.4" stroke="#fff" stroke-width="1.25" fill="none"/><path d="M23.7 16.799999999999997L27.900000000000002 21.0M27.900000000000002 16.799999999999997L23.7 21.0" stroke="#fff" stroke-width="1.25" fill="none"/></svg>
<span class="t" style="left:441.4px;top:1117.0px;font-size:22.38px;line-height:22.38px;color:#1a73e8;transform:scaleX(0.9670);transform-origin:0 0;">Купить сухпай ИРП Украины США</span>
<span class="t" style="left:1024.3px;top:1118.0px;font-size:20.93px;line-height:20.93px;color:#5f6368;transform:scaleX(1.0000);transform-origin:0 0;">69,101</span>
<span class="t" style="left:1234.1px;top:1105.0px;font-size:20.93px;line-height:20.93px;color:#5f6368;transform:scaleX(1.0000);transform-origin:0 0;">7,343</span>
<span class="t" style="left:1235.3px;top:1130.0px;font-size:20.93px;line-height:20.93px;color:#5f6368;transform:scaleX(1.0000);transform-origin:0 0;">clicks</span>
<span class="t" style="left:1363.5px;top:1118.0px;font-size:20.93px;line-height:20.93px;color:#5f6368;transform:scaleX(1.0000);transform-origin:0 0;">10.63%</span>
<span class="t" style="left:1493.6px;top:1118.0px;font-size:20.93px;line-height:20.93px;color:#5f6368;transform:scaleX(1.0000);transform-origin:0 0;">UAH0.65</span>
<span class="t" style="left:1940.4px;top:1118.0px;font-size:20.93px;line-height:20.93px;color:#5f6368;transform:scaleX(1.0000);transform-origin:0 0;">217.00</span>
<span class="t" style="left:2051.7px;top:1118.0px;font-size:20.93px;line-height:20.93px;color:#5f6368;transform:scaleX(1.0000);transform-origin:0 0;">UAH21.85</span>
<span class="t" style="left:2213.5px;top:1118.0px;font-size:20.93px;line-height:20.93px;color:#5f6368;transform:scaleX(1.0000);transform-origin:0 0;">2.96%</span>
<span class="t" style="left:2483.6px;top:1118.0px;font-size:20.93px;line-height:20.93px;color:#5f6368;transform:scaleX(1.0000);transform-origin:0 0;">51.00</span>
<div class="b" style="left:231.0px;top:1187.3px;width:28.3px;height:28.3px;border:3.3px solid #757575;border-radius:4px;box-sizing:border-box;"></div>
<div class="b" style="left:295.7px;top:1190.7px;width:21.6px;height:21.6px;background:#757575;border-radius:50%;"></div>
<div class="b" style="left:302.6px;top:1196.9px;width:2.7px;height:9.2px;background:#fff;"></div>
<div class="b" style="left:307.6px;top:1196.9px;width:2.7px;height:9.2px;background:#fff;"></div>
<svg class="i" style="left:386.0px;top:1187.3px" width="36" height="28.7" viewBox="0 0 36 28.7"><rect width="36" height="28.7" rx="3.2" fill="#8c8c8c"/><line x1="9.4" y1="22.7" x2="20.5" y2="12" stroke="#fff" stroke-width="4" stroke-linecap="round"/><line x1="17.3" y1="12.1" x2="20.3" y2="15.2" stroke="#8c8c8c" stroke-width="0.9"/><circle cx="19.9" cy="12.6" r="0.7" fill="#8c8c8c"/><path d="M11.200000000000001 4.35L15.4 8.55M15.4 4.35L11.200000000000001 8.55" stroke="#fff" stroke-width="1.25" fill="none"/><path d="M23.7 4.199999999999999L27.900000000000002 8.4M27.900000000000002 4.199999999999999L23.7 8.4" stroke="#fff" stroke-width="1.25" fill="none"/><path d="M23.7 16.799999999999997L27.900000000000002 21.0M27.900000000000002 16.799999999999997L23.7 21.0" stroke="#fff" stroke-width="1.25" fill="none"/></svg>
<span class="t" style="left:441.4px;top:1191.0px;font-size:22.38px;line-height:22.38px;color:#1a73e8;transform:scaleX(0.9788);transform-origin:0 0;">Купить сухпай ирп mre консервы</span>
<span class="t" style="left:1024.3px;top:1192.0px;font-size:20.93px;line-height:20.93px;color:#5f6368;transform:scaleX(1.0000);transform-origin:0 0;">44,687</span>
<span class="t" style="left:1235.7px;top:1179.0px;font-size:20.93px;line-height:20.93px;color:#5f6368;transform:scaleX(1.0000);transform-origin:0 0;">4,110</span>
<span class="t" style="left:1235.3px;top:1204.0px;font-size:20.93px;line-height:20.93px;color:#5f6368;transform:scaleX(1.0000);transform-origin:0 0;">clicks</span>
<span class="t" style="left:1375.2px;top:1192.0px;font-size:20.93px;line-height:20.93px;color:#5f6368;transform:scaleX(1.0000);transform-origin:0 0;">9.20%</span>
<span class="t" style="left:1493.6px;top:1192.0px;font-size:20.93px;line-height:20.93px;color:#5f6368;transform:scaleX(1.0000);transform-origin:0 0;">UAH0.82</span>
<span class="t" style="left:1940.4px;top:1192.0px;font-size:20.93px;line-height:20.93px;color:#5f6368;transform:scaleX(1.0000);transform-origin:0 0;">141.00</span>
<span class="t" style="left:2051.7px;top:1192.0px;font-size:20.93px;line-height:20.93px;color:#5f6368;transform:scaleX(1.0000);transform-origin:0 0;">UAH24.01</span>
<span class="t" style="left:2213.5px;top:1192.0px;font-size:20.93px;line-height:20.93px;color:#5f6368;transform:scaleX(1.0000);transform-origin:0 0;">3.43%</span>
<span class="t" style="left:2483.6px;top:1192.0px;font-size:20.93px;line-height:20.93px;color:#5f6368;transform:scaleX(1.0000);transform-origin:0 0;">37.00</span>
<div class="b" style="left:231.0px;top:1261.1px;width:28.3px;height:28.3px;border:3.3px solid #757575;border-radius:4px;box-sizing:border-box;"></div>
<div class="b" style="left:295.7px;top:1264.5px;width:21.6px;height:21.6px;background:#757575;border-radius:50%;"></div>
<div class="b" style="left:302.6px;top:1270.7px;width:2.7px;height:9.2px;background:#fff;"></div>
<div class="b" style="left:307.6px;top:1270.7px;width:2.7px;height:9.2px;background:#fff;"></div>
<svg class="i" style="left:386.0px;top:1261.1px" width="36" height="28.7" viewBox="0 0 36 28.7"><rect width="36" height="28.7" rx="3.2" fill="#8c8c8c"/><line x1="9.4" y1="22.7" x2="20.5" y2="12" stroke="#fff" stroke-width="4" stroke-linecap="round"/><line x1="17.3" y1="12.1" x2="20.3" y2="15.2" stroke="#8c8c8c" stroke-width="0.9"/><circle cx="19.9" cy="12.6" r="0.7" fill="#8c8c8c"/><path d="M11.200000000000001 4.35L15.4 8.55M15.4 4.35L11.200000000000001 8.55" stroke="#fff" stroke-width="1.25" fill="none"/><path d="M23.7 4.199999999999999L27.900000000000002 8.4M27.900000000000002 4.199999999999999L23.7 8.4" stroke="#fff" stroke-width="1.25" fill="none"/><path d="M23.7 16.799999999999997L27.900000000000002 21.0M27.900000000000002 16.799999999999997L23.7 21.0" stroke="#fff" stroke-width="1.25" fill="none"/></svg>
<span class="t" style="left:441.4px;top:1264.0px;font-size:22.38px;line-height:22.38px;color:#1a73e8;transform:scaleX(0.9599);transform-origin:0 0;">Купить сухпай Украины ИРП MRE</span>
<span class="t" style="left:1076.7px;top:1265.0px;font-size:20.93px;line-height:20.93px;color:#202124;transform:scaleX(1.0000);transform-origin:0 0;">0</span>
<span class="t" style="left:1274.9px;top:1265.0px;font-size:20.93px;line-height:20.93px;color:#202124;transform:scaleX(1.0000);transform-origin:0 0;">0</span>
<span class="t" style="left:1422.9px;top:1265.0px;font-size:20.93px;line-height:20.93px;color:#202124;transform:scaleX(1.0000);transform-origin:0 0;">–</span>
<span class="t" style="left:1566.9px;top:1265.0px;font-size:20.93px;line-height:20.93px;color:#202124;transform:scaleX(1.0000);transform-origin:0 0;">–</span>
<span class="t" style="left:1963.7px;top:1265.0px;font-size:20.93px;line-height:20.93px;color:#202124;transform:scaleX(1.0000);transform-origin:0 0;">0.00</span>
<span class="t" style="left:2063.4px;top:1265.0px;font-size:20.93px;line-height:20.93px;color:#202124;transform:scaleX(1.0000);transform-origin:0 0;">UAH0.00</span>
<span class="t" style="left:2213.5px;top:1265.0px;font-size:20.93px;line-height:20.93px;color:#202124;transform:scaleX(1.0000);transform-origin:0 0;">0.00%</span>
<span class="t" style="left:2495.3px;top:1265.0px;font-size:20.93px;line-height:20.93px;color:#202124;transform:scaleX(1.0000);transform-origin:0 0;">0.00</span>
<svg class="i" style="left:314.1px;top:1255.0px;" width="42.0" height="42.0" viewBox="0 0 24 24" fill="#979a9f" preserveAspectRatio="none"><path d="M7 10l5 5 5-5z"/></svg>
<svg class="i" style="left:804.0px;top:1260.0px;" width="30.0" height="30.0" viewBox="0 0 24 24" fill="#e6e8ea" preserveAspectRatio="none"><path d="M3 17.25V21h3.75L17.81 9.94l-3.75-3.75L3 17.25zM20.71 7.04c.39-.39.39-1.02 0-1.41l-2.34-2.34c-.39-.39-1.02-.39-1.41 0l-1.83 1.83 3.75 3.75 1.83-1.83z"/></svg>
<div class="b" style="left:1615.4px;top:1009.6px;width:251.9px;height:14.4px;background:#f2f3f6;"></div>
<div class="b" style="left:1615.4px;top:1081.7px;width:251.9px;height:14.6px;background:#f6f7f9;"></div>
<div class="b" style="left:1615.4px;top:1154.0px;width:251.9px;height:14.4px;background:#fafafb;"></div>
<div class="b" style="left:1615.4px;top:1226.2px;width:251.9px;height:14.5px;background:#fafafa;"></div>
<div class="b" style="left:1716.4px;top:1038.5px;width:14.7px;height:14.6px;background:#ebecef;"></div>
<div class="b" style="left:1716.4px;top:1052.9px;width:14.7px;height:14.6px;background:#ebecee;"></div>
<div class="b" style="left:1730.8px;top:1038.5px;width:14.7px;height:14.6px;background:#ebecef;"></div>
<div class="b" style="left:1730.8px;top:1052.9px;width:14.7px;height:14.6px;background:#cfd0d4;"></div>
<div class="b" style="left:1745.3px;top:1038.5px;width:14.7px;height:14.6px;background:#d5d6da;"></div>
<div class="b" style="left:1745.3px;top:1052.9px;width:14.7px;height:14.6px;background:#cdced2;"></div>
<div class="b" style="left:1759.7px;top:1038.5px;width:14.7px;height:14.6px;background:#dddee1;"></div>
<div class="b" style="left:1759.7px;top:1052.9px;width:14.7px;height:14.6px;background:#d3d4d7;"></div>
<div class="b" style="left:1774.2px;top:1038.5px;width:14.7px;height:14.6px;background:#e0e1e4;"></div>
<div class="b" style="left:1774.2px;top:1052.9px;width:14.7px;height:14.6px;background:#d5d6d9;"></div>
<div class="b" style="left:1788.6px;top:1038.5px;width:14.7px;height:14.6px;background:#dcdde0;"></div>
<div class="b" style="left:1788.6px;top:1052.9px;width:14.7px;height:14.6px;background:#e3e4e7;"></div>
<div class="b" style="left:1803.0px;top:1038.5px;width:14.7px;height:14.6px;background:#d3d4d8;"></div>
<div class="b" style="left:1803.0px;top:1052.9px;width:14.7px;height:14.6px;background:#cdced2;"></div>
<div class="b" style="left:1817.5px;top:1038.5px;width:14.7px;height:14.6px;background:#ebecee;"></div>
<div class="b" style="left:1817.5px;top:1052.9px;width:14.7px;height:14.6px;background:#d9dadd;"></div>
<div class="b" style="left:1831.9px;top:1038.5px;width:14.7px;height:14.6px;background:#d3d4d8;"></div>
<div class="b" style="left:1831.9px;top:1052.9px;width:14.7px;height:14.6px;background:#cbccd0;"></div>
<div class="b" style="left:1846.4px;top:1038.5px;width:14.7px;height:14.6px;background:#e6e7ea;"></div>
<div class="b" style="left:1846.4px;top:1052.9px;width:14.7px;height:14.6px;background:#e3e4e7;"></div>
<div class="b" style="left:1716.4px;top:1110.6px;width:14.7px;height:14.6px;background:#f5f5f6;"></div>
<div class="b" style="left:1716.4px;top:1125.0px;width:14.7px;height:14.6px;background:#eeeeef;"></div>
<div class="b" style="left:1730.8px;top:1110.6px;width:14.7px;height:14.6px;background:#f5f5f6;"></div>
<div class="b" style="left:1730.8px;top:1125.0px;width:14.7px;height:14.6px;background:#d8d8db;"></div>
<div class="b" style="left:1745.3px;top:1110.6px;width:14.7px;height:14.6px;background:#e3e3e5;"></div>
<div class="b" style="left:1745.3px;top:1125.0px;width:14.7px;height:14.6px;background:#d0d0d3;"></div>
<div class="b" style="left:1759.7px;top:1110.6px;width:14.7px;height:14.6px;background:#f3f3f4;"></div>
<div class="b" style="left:1759.7px;top:1125.0px;width:14.7px;height:14.6px;background:#dadadd;"></div>
<div class="b" style="left:1774.2px;top:1110.6px;width:14.7px;height:14.6px;background:#ebebed;"></div>
<div class="b" style="left:1774.2px;top:1125.0px;width:14.7px;height:14.6px;background:#dadadd;"></div>
<div class="b" style="left:1788.6px;top:1110.6px;width:14.7px;height:14.6px;background:#ebebed;"></div>
<div class="b" style="left:1788.6px;top:1125.0px;width:14.7px;height:14.6px;background:#e6e6e8;"></div>
<div class="b" style="left:1803.0px;top:1110.6px;width:14.7px;height:14.6px;background:#e6e6e8;"></div>
<div class="b" style="left:1803.0px;top:1125.0px;width:14.7px;height:14.6px;background:#dedee0;"></div>
<div class="b" style="left:1817.5px;top:1110.6px;width:14.7px;height:14.6px;background:#f3f3f4;"></div>
<div class="b" style="left:1817.5px;top:1125.0px;width:14.7px;height:14.6px;background:#e6e6e8;"></div>
<div class="b" style="left:1831.9px;top:1110.6px;width:14.7px;height:14.6px;background:#e6e6e8;"></div>
<div class="b" style="left:1831.9px;top:1125.0px;width:14.7px;height:14.6px;background:#d3d3d6;"></div>
<div class="b" style="left:1846.4px;top:1110.6px;width:14.7px;height:14.6px;background:#f3f3f4;"></div>
<div class="b" style="left:1846.4px;top:1125.0px;width:14.7px;height:14.6px;background:#f0f0f1;"></div>
<div class="b" style="left:1716.4px;top:1183.0px;width:14.7px;height:14.6px;background:#f7f7f8;"></div>
<div class="b" style="left:1716.4px;top:1197.4px;width:14.7px;height:14.6px;background:#eaeaeb;"></div>
<div class="b" style="left:1730.8px;top:1183.0px;width:14.7px;height:14.6px;background:#f7f7f8;"></div>
<div class="b" style="left:1730.8px;top:1197.4px;width:14.7px;height:14.6px;background:#d3d3d6;"></div>
<div class="b" style="left:1745.3px;top:1183.0px;width:14.7px;height:14.6px;background:#ebebed;"></div>
<div class="b" style="left:1745.3px;top:1197.4px;width:14.7px;height:14.6px;background:#c9c9cc;"></div>
<div class="b" style="left:1759.7px;top:1183.0px;width:14.7px;height:14.6px;background:#f0f0f1;"></div>
<div class="b" style="left:1759.7px;top:1197.4px;width:14.7px;height:14.6px;background:#d8d8db;"></div>
<div class="b" style="left:1774.2px;top:1183.0px;width:14.7px;height:14.6px;background:#f0f0f1;"></div>
<div class="b" style="left:1774.2px;top:1197.4px;width:14.7px;height:14.6px;background:#d8d8db;"></div>
<div class="b" style="left:1788.6px;top:1183.0px;width:14.7px;height:14.6px;background:#e9e9eb;"></div>
<div class="b" style="left:1788.6px;top:1197.4px;width:14.7px;height:14.6px;background:#cfcfd2;"></div>
<div class="b" style="left:1803.0px;top:1183.0px;width:14.7px;height:14.6px;background:#f0f0f1;"></div>
<div class="b" style="left:1803.0px;top:1197.4px;width:14.7px;height:14.6px;background:#cfcfd2;"></div>
<div class="b" style="left:1817.5px;top:1183.0px;width:14.7px;height:14.6px;background:#f0f0f1;"></div>
<div class="b" style="left:1817.5px;top:1197.4px;width:14.7px;height:14.6px;background:#dadadc;"></div>
<div class="b" style="left:1831.9px;top:1183.0px;width:14.7px;height:14.6px;background:#e6e6e8;"></div>
<div class="b" style="left:1831.9px;top:1197.4px;width:14.7px;height:14.6px;background:#c6c6c9;"></div>
<div class="b" style="left:1846.4px;top:1183.0px;width:14.7px;height:14.6px;background:#f3f3f4;"></div>
<div class="b" style="left:1846.4px;top:1197.4px;width:14.7px;height:14.6px;background:#e3e3e5;"></div>
<div class="b" style="left:1759.9px;top:1255.0px;width:14.7px;height:14.6px;background:#f0f0f0;"></div>
<div class="b" style="left:1759.9px;top:1269.4px;width:14.7px;height:14.6px;background:#d6d6d8;"></div>
<div class="b" style="left:1774.3px;top:1255.0px;width:14.7px;height:14.6px;background:#eeeeee;"></div>
<div class="b" style="left:1774.3px;top:1269.4px;width:14.7px;height:14.6px;background:#b0b0b3;"></div>
<div class="b" style="left:1788.8px;top:1255.0px;width:14.7px;height:14.6px;background:#eeeeee;"></div>
<div class="b" style="left:1788.8px;top:1269.4px;width:14.7px;height:14.6px;background:#b3b3b6;"></div>
<div class="b" style="left:1803.2px;top:1255.0px;width:14.7px;height:14.6px;background:#ededed;"></div>
<div class="b" style="left:1803.2px;top:1269.4px;width:14.7px;height:14.6px;background:#b3b3b6;"></div>
<div class="b" style="left:1817.7px;top:1255.0px;width:14.7px;height:14.6px;background:#f0f0f0;"></div>
<div class="b" style="left:1817.7px;top:1269.4px;width:14.7px;height:14.6px;background:#c6c6c8;"></div>
<div class="b" style="left:1832.1px;top:1255.0px;width:14.7px;height:14.6px;background:#e3e3e5;"></div>
<div class="b" style="left:1832.1px;top:1269.4px;width:14.7px;height:14.6px;background:#a9a9ac;"></div>
<div class="b" style="left:1846.5px;top:1255.0px;width:14.7px;height:14.6px;background:#ededed;"></div>
<div class="b" style="left:1846.5px;top:1269.4px;width:14.7px;height:14.6px;background:#d3d3d5;"></div>
</body></html>
